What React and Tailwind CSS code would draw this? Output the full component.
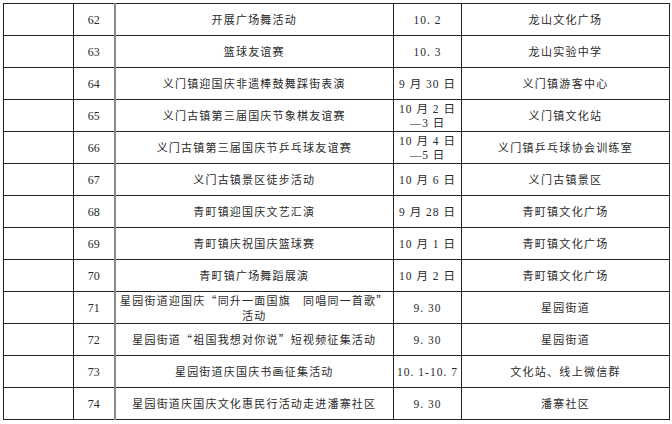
const rows = [
  { no: '62', name: ['开展广场舞活动'], date: ['10. 2'], place: '龙山文化广场' },
  { no: '63', name: ['篮球友谊赛'], date: ['10. 3'], place: '龙山实验中学' },
  { no: '64', name: ['义门镇迎国庆非遗棒鼓舞踩街表演'], date: ['9 月 30 日'], place: '义门镇游客中心' },
  { no: '65', name: ['义门古镇第三届国庆节象棋友谊赛'], date: ['10 月 2 日', '—3 日'], place: '义门镇文化站' },
  { no: '66', name: ['义门古镇第三届国庆节乒乓球友谊赛'], date: ['10 月 4 日', '—5 日'], place: '义门镇乒乓球协会训练室' },
  { no: '67', name: ['义门古镇景区徒步活动'], date: ['10 月 6 日'], place: '义门古镇景区' },
  { no: '68', name: ['青町镇迎国庆文艺汇演'], date: ['9 月 28 日'], place: '青町镇文化广场' },
  { no: '69', name: ['青町镇庆祝国庆篮球赛'], date: ['10 月 1 日'], place: '青町镇文化广场' },
  { no: '70', name: ['青町镇广场舞蹈展演'], date: ['10 月 2 日'], place: '青町镇文化广场' },
  { no: '71', name: ['星园街道迎国庆“同升一面国旗　同唱同一首歌”', '活动'], date: ['9. 30'], place: '星园街道' },
  { no: '72', name: ['星园街道“祖国我想对你说”短视频征集活动'], date: ['9. 30'], place: '星园街道' },
  { no: '73', name: ['星园街道庆国庆书画征集活动'], date: ['10. 1-10. 7'], place: '文化站、线上微信群' },
  { no: '74', name: ['星园街道庆国庆文化惠民行活动走进潘寨社区'], date: ['9. 30'], place: '潘寨社区' },
];

const cjk = { fontFamily: '"Noto Sans CJK SC", sans-serif' };

export default function App() {
  return (
    <div className="w-[672px] h-[424px] bg-white pt-[3px] pl-[3px] overflow-hidden">
      <table
        className="table-fixed border-collapse w-[666px] text-[#2a2a2a] text-[11px]"
        style={{ fontFamily: '"Liberation Serif", "Noto Sans CJK SC", serif' }}
      >
        <colgroup>
          <col className="w-[70px]" />
          <col className="w-[41px]" />
          <col className="w-[279px]" />
          <col className="w-[68px]" />
          <col className="w-[208px]" />
        </colgroup>
        <tbody>
          {rows.map((r) => (
            <tr key={r.no} className="h-[32px]">
              <td className="border border-[#222]" />
              <td className="border border-[#222] border-r-2 border-r-[#888] text-center text-[12px]">{r.no}</td>
              <td className="border border-[#222] text-center tracking-[1.2px] leading-[15px] px-0" style={cjk}>
                {r.name.map((l, i) => (
                  <div key={i} className="whitespace-nowrap">{l}</div>
                ))}
              </td>
              <td className="border border-[#222] text-center tracking-[1px] leading-[14px] text-[11.5px]">
                {r.date.map((l, i) => (
                  <div key={i} className="whitespace-nowrap">{l}</div>
                ))}
              </td>
              <td className="border border-[#222] text-center tracking-[1.3px]" style={cjk}>{r.place}</td>
            </tr>
          ))}
        </tbody>
      </table>
    </div>
  );
}
